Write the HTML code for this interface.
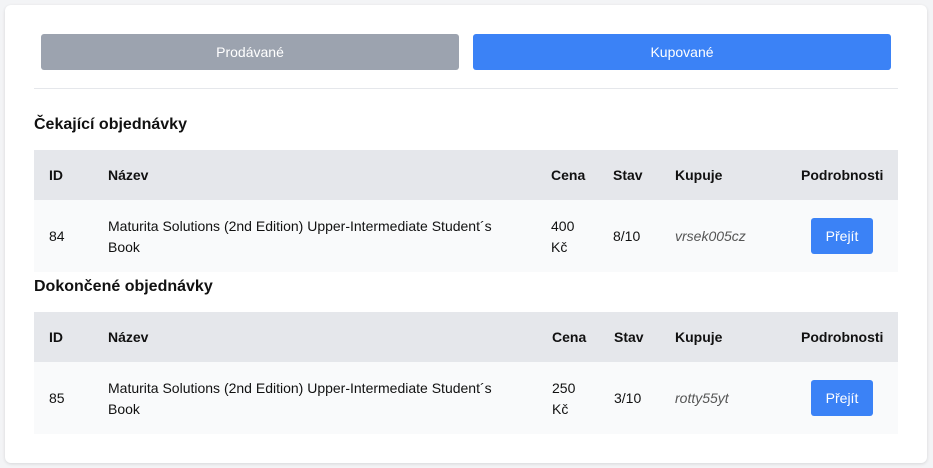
<!DOCTYPE html>
<html><head><meta charset="utf-8"><style>
*{margin:0;padding:0;box-sizing:border-box}
body{width:933px;height:468px;background:#f3f4f6;font-family:"Liberation Sans","DejaVu Sans",sans-serif;color:#111;position:relative;overflow:hidden}
.card{position:absolute;left:5px;top:5px;width:922px;height:458px;background:#fff;border-radius:6px;box-shadow:0 1px 3px rgba(0,0,0,.12)}
.a{position:absolute}
.btn{position:absolute;top:34px;height:36px;border-radius:3px;color:#fff;font-size:14px;display:flex;align-items:center;justify-content:center}
.hr{left:34px;top:88px;width:864px;height:1px;background:#e5e7eb}
.h2{left:34px;font-size:16px;font-weight:bold}
.th{left:34px;width:864px;height:50px;background:#e5e7eb}
.tr{left:34px;width:864px;height:72px;background:#f9fafb}
.b{font-weight:bold;font-size:14px}
.t{font-size:14px;line-height:21px}
.go{position:absolute;left:811px;width:62px;height:36px;background:#3b82f6;color:#fff;border-radius:3px;font-size:14px;display:flex;align-items:center;justify-content:center}
i{color:#555}
</style></head><body>
<div class="card"></div>
<div class="btn" style="left:41px;width:418px;background:#9ca3af">Prodávané</div>
<div class="btn" style="left:473px;width:418px;background:#3b82f6">Kupované</div>
<div class="a hr"></div>

<div class="a h2" style="top:116px">Čekající objednávky</div>
<div class="a th" style="top:150px"></div>
<div class="a tr" style="top:200px"></div>
<div class="a b" style="left:49px;top:167px">ID</div>
<div class="a b" style="left:108px;top:167px">Název</div>
<div class="a b" style="left:551px;top:167px">Cena</div>
<div class="a b" style="left:613px;top:167px">Stav</div>
<div class="a b" style="left:675px;top:167px">Kupuje</div>
<div class="a b" style="left:801px;top:167px">Podrobnosti</div>
<div class="a t" style="left:49px;top:226px">84</div>
<div class="a t" style="left:108px;top:216px">Maturita Solutions (2nd Edition) Upper-Intermediate Student´s<br>Book</div>
<div class="a t" style="left:551px;top:216px">400<br>Kč</div>
<div class="a t" style="left:613px;top:226px">8/10</div>
<div class="a t" style="left:675px;top:226px"><i>vrsek005cz</i></div>
<div class="go" style="top:218px">Přejít</div>

<div class="a h2" style="top:278px">Dokončené objednávky</div>
<div class="a th" style="top:312px"></div>
<div class="a tr" style="top:362px"></div>
<div class="a b" style="left:49px;top:329px">ID</div>
<div class="a b" style="left:108px;top:329px">Název</div>
<div class="a b" style="left:552px;top:329px">Cena</div>
<div class="a b" style="left:614px;top:329px">Stav</div>
<div class="a b" style="left:675px;top:329px">Kupuje</div>
<div class="a b" style="left:801px;top:329px">Podrobnosti</div>
<div class="a t" style="left:49px;top:388px">85</div>
<div class="a t" style="left:108px;top:378px">Maturita Solutions (2nd Edition) Upper-Intermediate Student´s<br>Book</div>
<div class="a t" style="left:552px;top:378px">250<br>Kč</div>
<div class="a t" style="left:614px;top:388px">3/10</div>
<div class="a t" style="left:675px;top:388px"><i>rotty55yt</i></div>
<div class="go" style="top:380px">Přejít</div>
</body></html>
